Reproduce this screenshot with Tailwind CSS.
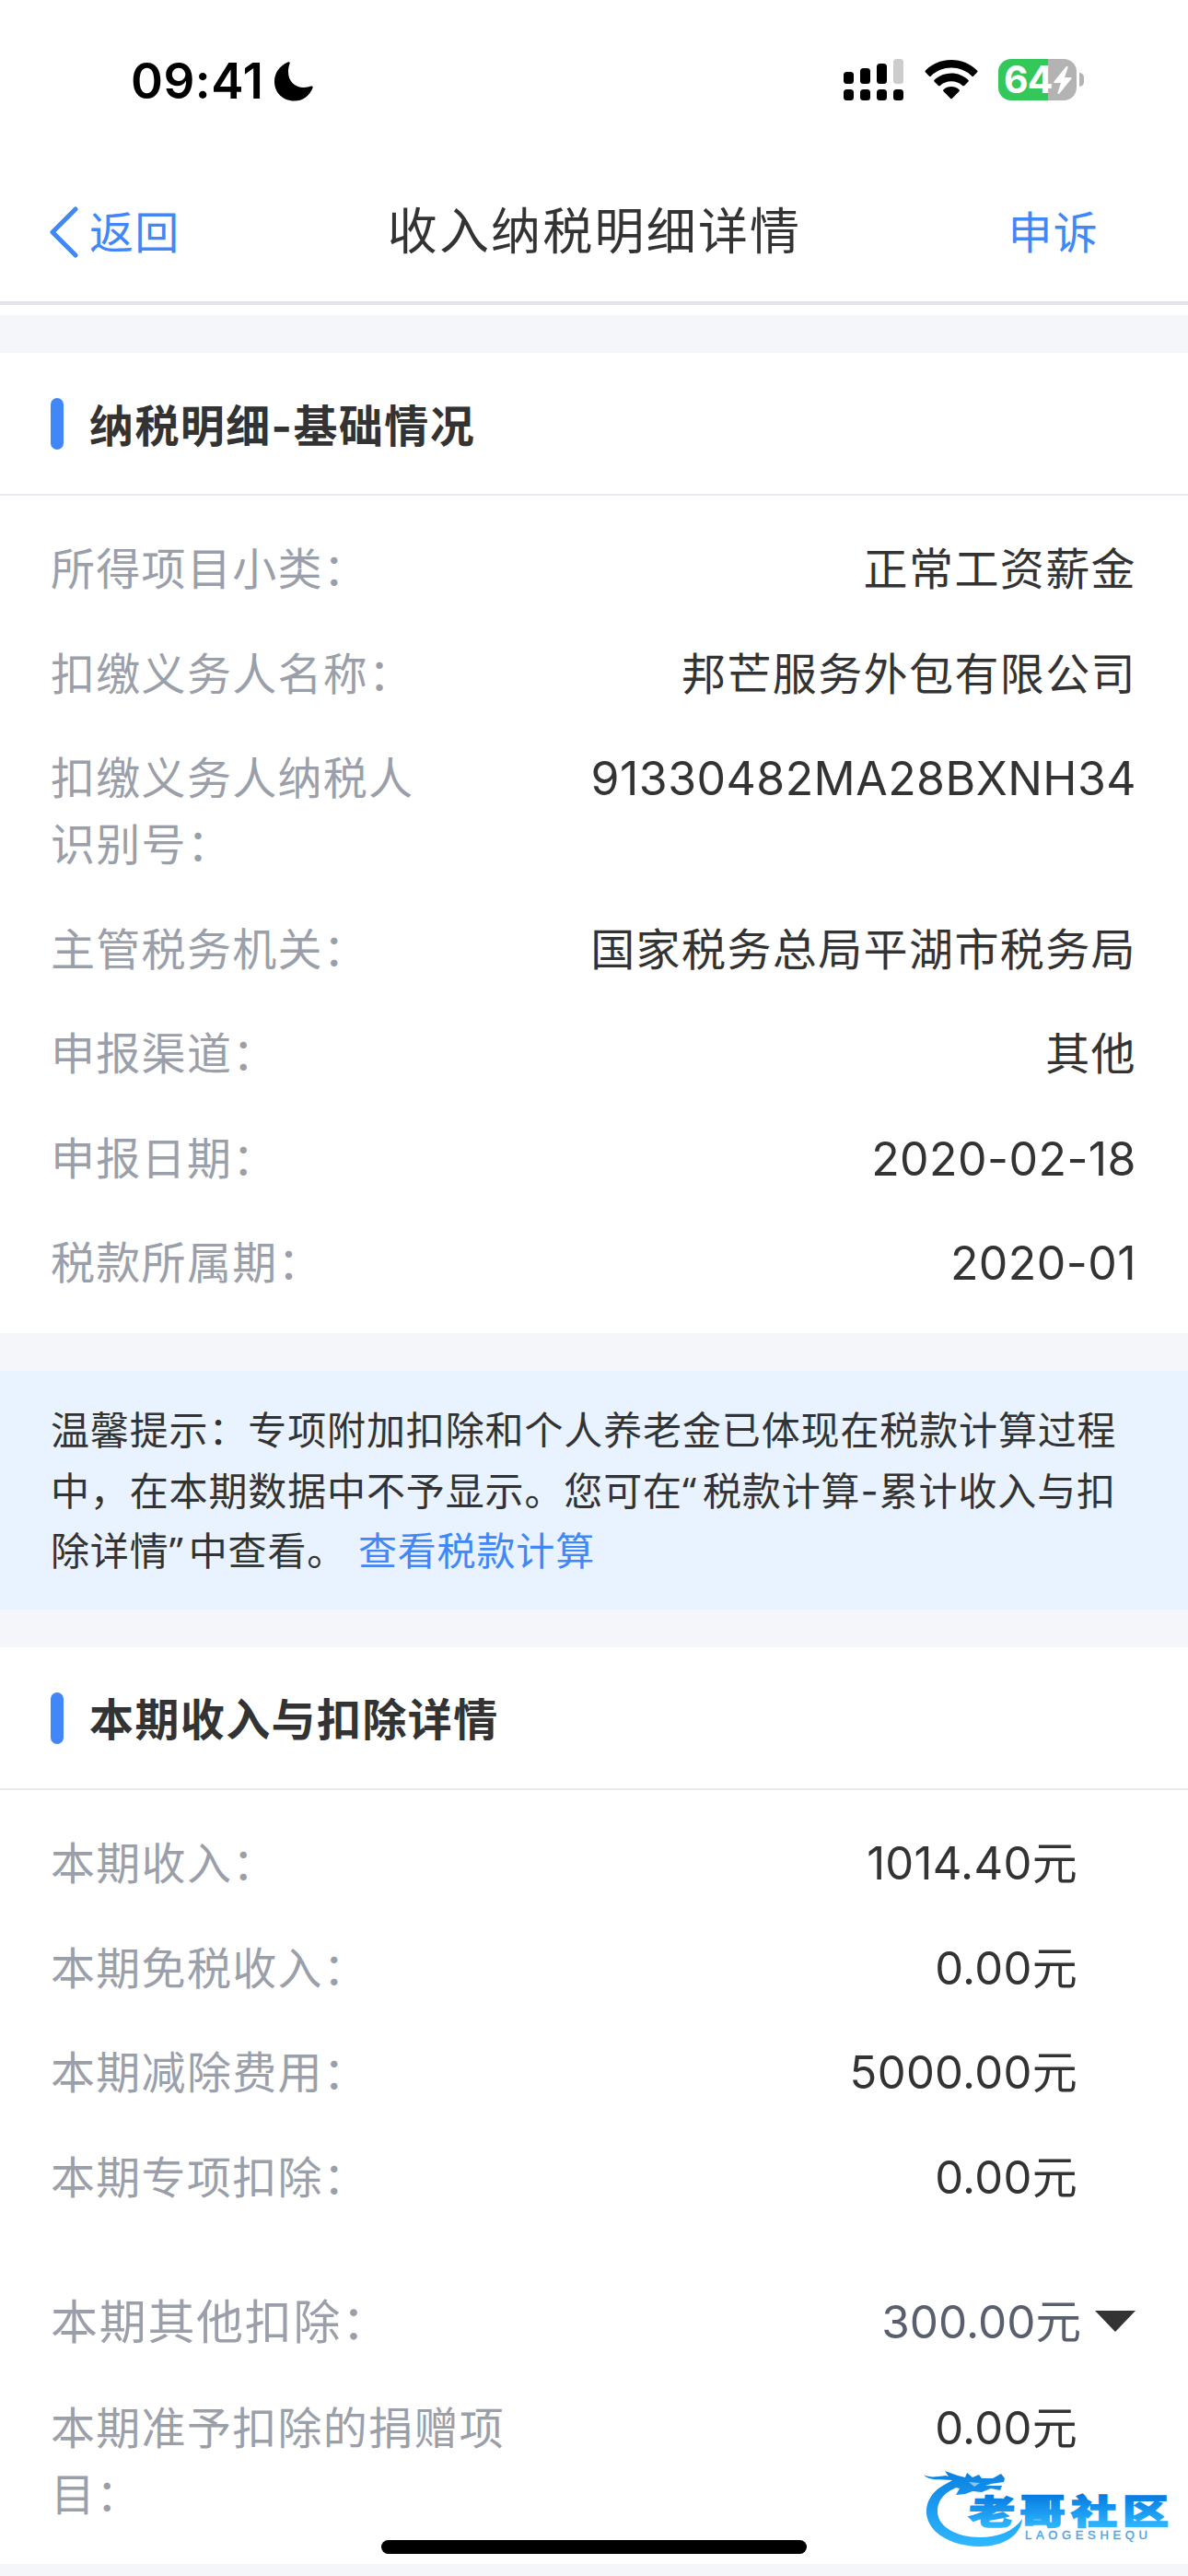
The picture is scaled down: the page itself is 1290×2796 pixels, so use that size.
<!DOCTYPE html>
<html lang="zh-CN">
  <head>
    <meta charset="UTF-8" />
    <meta name="viewport" content="width=device-width, initial-scale=1.0" />
    <title>收入纳税明细详情</title>
    <script src="https://cdn.jsdelivr.net/npm/@tailwindcss/browser@4"></script>
  </head>
  <body class="bg-white font-['Inter','Noto_Sans_CJK_SC',sans-serif] text-[#333]">
    <div class="relative flex h-[2796px] w-[1290px] flex-col overflow-hidden bg-[#f4f6fa]">
      <!-- status bar -->
      <div class="flex h-[177px] shrink-0 items-start justify-between bg-white pt-16 pr-[113px] pl-[142px] text-black">
        <div class="flex items-start">
          <span class="h-[46px] w-[156px] text-[53px] leading-[49px] font-semibold tracking-[0.500px]">09:41</span>
          <svg class="mt-[3px] h-[43px] w-[42px]" viewBox="0 0 42 43">
            <path d="M14.500 0.500C16.200 -0.300 17 0.700 16.600 2C15.300 5.500 15 8.500 15 11C15 21 22 28 32 28C35 28 37.500 27.300 39.500 26.600C41.200 26 42 27 41.500 28.500A21.300 21.300 0 0 1 21.500 42.500C9 42.500 0 33.500 0 21.500C0 12 6 4 14.500 0.500Z" />
          </svg>
        </div>
        <div class="flex items-start">
          <svg class="h-[46px] w-[66px]" viewBox="0 0 66 46">
            <rect x="0" y="14" width="11" height="13" rx="3.500" />
            <rect x="18" y="10" width="11" height="17" rx="3.500" />
            <rect x="36" y="5" width="11" height="22" rx="3.500" />
            <rect x="54" y="0" width="11" height="27" rx="3.500" fill="#ccc" />
            <rect x="0" y="33" width="11" height="12" rx="3.500" />
            <rect x="18" y="33" width="11" height="12" rx="3.500" />
            <rect x="36" y="33" width="11" height="12" rx="3.500" />
            <rect x="54" y="33" width="11" height="12" rx="3.500" />
          </svg>
          <svg class="mt-px ml-[22px] h-[43px] w-[58px]" viewBox="0 0 58 43">
            <path d="M29 0C40 0 50 4.300 57 11.500C57.700 12.200 57.700 12.900 57 13.600L53.200 17.400C52.500 18.100 51.800 18.100 51.100 17.400A32 32 0 0 0 6.900 17.400C6.200 18.100 5.500 18.100 4.800 17.400L1 13.600C0.300 12.900 0.300 12.200 1 11.500C8 4.300 18 0 29 0Z" />
            <path d="M29 14.500C36 14.500 42.500 17.200 47.300 21.700C48 22.400 48 23.100 47.300 23.800L43.300 27.800C42.600 28.500 41.900 28.500 41.200 27.900A18.500 18.500 0 0 0 16.800 27.900C16.100 28.500 15.400 28.500 14.700 27.800L10.700 23.800C10 23.100 10 22.400 10.700 21.700C15.500 17.200 22 14.500 29 14.500Z" />
            <path d="M29 29C32.200 29 35.200 30.200 37.400 32.200C38.100 32.900 38.100 33.600 37.400 34.300L30 41.700C29.300 42.400 28.700 42.400 28 41.700L20.600 34.300C19.900 33.600 19.900 32.900 20.600 32.200C22.800 30.200 25.800 29 29 29Z" />
          </svg>
          <div class="ml-[22px] flex items-center">
            <div class="flex h-[45px] w-[85px] items-center rounded-[14px] bg-linear-to-r from-[#34c759] from-64% to-[#b3b3b3] to-64% pl-[6px] text-white">
              <span class="w-[54px] text-[41px] leading-none font-bold tracking-[-1px]">64</span>
              <svg class="h-[30px] w-5" viewBox="0 0 20 30" fill="#fff">
                <path d="M13.500 0.500L0.500 16.500C0 17.200 0.200 18 1.200 18H8L4.500 28.500C4.100 29.800 5.500 30.400 6.400 29.400L19.400 13.500C20 12.700 19.700 12 18.700 12H12L15.500 1.500C15.900 0.200 14.400 -0.500 13.500 0.500Z" />
              </svg>
            </div>
            <div class="ml-[3px] h-[15px] w-[5px] rounded-r-full bg-[#b3b3b3]"></div>
          </div>
        </div>
      </div>

      <!-- nav bar -->
      <header class="flex h-[154px] shrink-0 items-center justify-between border-b-4 border-[#e2e4e9] bg-white pr-[97px] pl-[54px] text-5xl tracking-[1.300px]">
        <a class="flex w-[300px] items-center text-[#4287f7]">
          <svg class="h-[56px] w-[32px]" viewBox="0 0 32 56" fill="none" stroke="#4287f7" stroke-width="5" stroke-linecap="round" stroke-linejoin="round">
            <path d="M28 3L3 28L28 53" />
          </svg>
          <span class="ml-[11px] pt-[2px]">返回</span>
        </a>
        <h1 class="mr-[-44px] text-center text-[54px] leading-none whitespace-nowrap tracking-[2.200px]">收入纳税明细详情</h1>
        <a class="w-[300px] pt-[2px] text-right text-[#4287f7]">申诉</a>
      </header>
      <div class="h-[11px] shrink-0 bg-white"></div>

      <!-- basic info -->
      <section class="mt-[41px] h-[1064px] shrink-0 bg-white">
        <div class="flex h-[155px] items-center border-b-2 border-[#e8eaf1] pl-[55px]">
          <i class="h-[56px] w-[14px] rounded-full bg-[#4287f7]"></i>
          <h2 class="ml-7 pt-[6px] text-5xl font-bold tracking-[1.400px]">纳税明细-基础情况</h2>
        </div>
        <dl id="basic" class="flex flex-col gap-[41.500px] pt-[44px] pr-[56px] pl-[55px] text-5xl leading-[72px]"></dl>
      </section>

      <!-- tip -->
      <p class="mt-[41px] h-[259px] shrink-0 bg-[#e8f3ff] pt-[32px] pl-[55px] text-[42px] leading-[65.500px] whitespace-nowrap tracking-[0.870px]">
        温馨提示：专项附加扣除和个人养老金已体现在税款计算过程<br />
        中，在本期数据中不予显示。您可在<span class="font-['Noto_Sans'] leading-none tracking-[7px]">“</span>税款计算-累计收入与扣<br />
        除详情<span class="font-['Noto_Sans'] leading-none tracking-[6px]">”</span>中查看。 <a class="text-[#4287f7]">查看税款计算</a>
      </p>

      <!-- income and deductions -->
      <section class="mt-[41px] h-[995px] shrink-0 bg-white">
        <div class="flex h-[155px] items-center border-b-2 border-[#e8eaea] pl-[55px]">
          <i class="h-[56px] w-[14px] rounded-full bg-[#4287f7]"></i>
          <h2 class="ml-7 pt-[5px] text-5xl font-bold tracking-[1.400px]">本期收入与扣除详情</h2>
        </div>
        <dl id="income" class="flex flex-col gap-[41.500px] pt-[44px] pr-[120px] pl-[55px] text-5xl leading-[72px]"></dl>
        <div class="mt-[82px] flex items-center justify-between pr-[57px] pl-[55px] text-[51px] leading-[76px]">
          <span class="tracking-[1.700px] text-[#9b9fa9]">本期其他扣除：</span>
          <span class="flex items-center pb-[2px] text-[49.500px] text-[#5a5f6e]">
            300.00元
            <svg class="ml-[15px] h-[23px] w-11" viewBox="0 0 44 23" fill="#333"><path d="M0 0H44L22 23Z" /></svg>
          </span>
        </div>
        <dl id="donation" class="pt-[40px] pr-[120px] pl-[55px] text-5xl leading-[72px]"></dl>
      </section>

      <!-- home indicator -->
      <div class="absolute top-[2757px] left-[414px] h-[15px] w-[462px] rounded-full bg-black"></div>

      <!-- community logo -->
      <svg class="absolute top-[2670px] left-[1000px] h-[100px] w-[280px]" viewBox="0 0 280 100">
        <defs>
          <linearGradient id="ring" x1="0" y1="10" x2="0" y2="94" gradientUnits="userSpaceOnUse">
            <stop offset="0" stop-color="#0a7fe0" />
            <stop offset="1" stop-color="#2fb8ff" />
          </linearGradient>
          <linearGradient id="word" x1="0" y1="-32" x2="0" y2="4" gradientUnits="userSpaceOnUse">
            <stop offset="0" stop-color="#0679e0" />
            <stop offset="1" stop-color="#2eb8ff" />
          </linearGradient>
        </defs>
        <g fill="url(#ring)">
          <path d="M40 21C16 28 5 42 6 58C8 80 34 94 64 94C90 94 108 82 110 64C100 78 84 84 64 84C38 84 18 72 18 56C18 42 28 32 48 27Z" />
          <path d="M3 16C10 20 18 18 27 17L30 18L26 12L40 17L48 19L50 14L56 19L63 16L66 20L78 20L87 15L91 20L90 24L76 26L70 28L88 28L86 33L76 31L66 35L56 34L48 37L38 38L42 31L34 29L28 26L34 22C22 21 8 23 3 16Z" />
          <path d="M52 24L64 25L58 29Z" fill="#fff" fill-opacity="0.500" />
        </g>
        <g fill="url(#word)" font-family="'Noto Sans CJK SC', sans-serif" font-weight="900" font-size="37" stroke="url(#word)" stroke-width="1.500">
          <text transform="translate(51 69.500) skewX(-4) scale(1.350 1)">老</text>
          <text transform="translate(107 69.500) scale(1.350 1)">哥</text>
          <text transform="translate(163 69.500) scale(1.350 1)">社</text>
          <text transform="translate(219 69.500) scale(1.350 1)">区</text>
        </g>
        <text x="113" y="86" font-family="'Liberation Sans', sans-serif" font-size="13" textLength="133" fill="#4ba3e8" stroke="#4ba3e8" stroke-width="0.400">LAOGESHEQU</text>
      </svg>
    </div>
  </body>
  <script type="text/javascript">
    const basic = [
      ["所得项目小类：", "正常工资薪金"],
      ["扣缴义务人名称：", "邦芒服务外包有限公司"],
      ["扣缴义务人纳税人<br />识别号：", "91330482MA28BXNH34"],
      ["主管税务机关：", "国家税务总局平湖市税务局"],
      ["申报渠道：", "其他"],
      ["申报日期：", "2020-02-18"],
      ["税款所属期：", "2020-01"],
    ];
    const income = [
      ["本期收入：", "1014.40元"],
      ["本期免税收入：", "0.00元"],
      ["本期减除费用：", "5000.00元"],
      ["本期专项扣除：", "0.00元"],
    ];
    const donation = [["本期准予扣除的捐赠项<br />目：", "0.00元"]];

    function valueClass(value) {
      if (value.endsWith("元")) return "text-[49px] tracking-[0.300px]";
      // codes and dates
      if (/^\d/.test(value)) return "text-[50px] tracking-[0.450px]";
      return "tracking-[1.400px]";
    }

    function render(id, rows) {
      let html = "";
      rows.forEach(([label, value]) => {
        html += `
          <div class="flex items-start justify-between whitespace-nowrap">
            <dt class="tracking-[1.300px] text-[#9b9fa9]">${label}</dt>
            <dd class="${valueClass(value)}">${value}</dd>
          </div>
        `;
      });
      document.getElementById(id).innerHTML = html;
    }

    render("basic", basic);
    render("income", income);
    render("donation", donation);
  </script>
</html>
